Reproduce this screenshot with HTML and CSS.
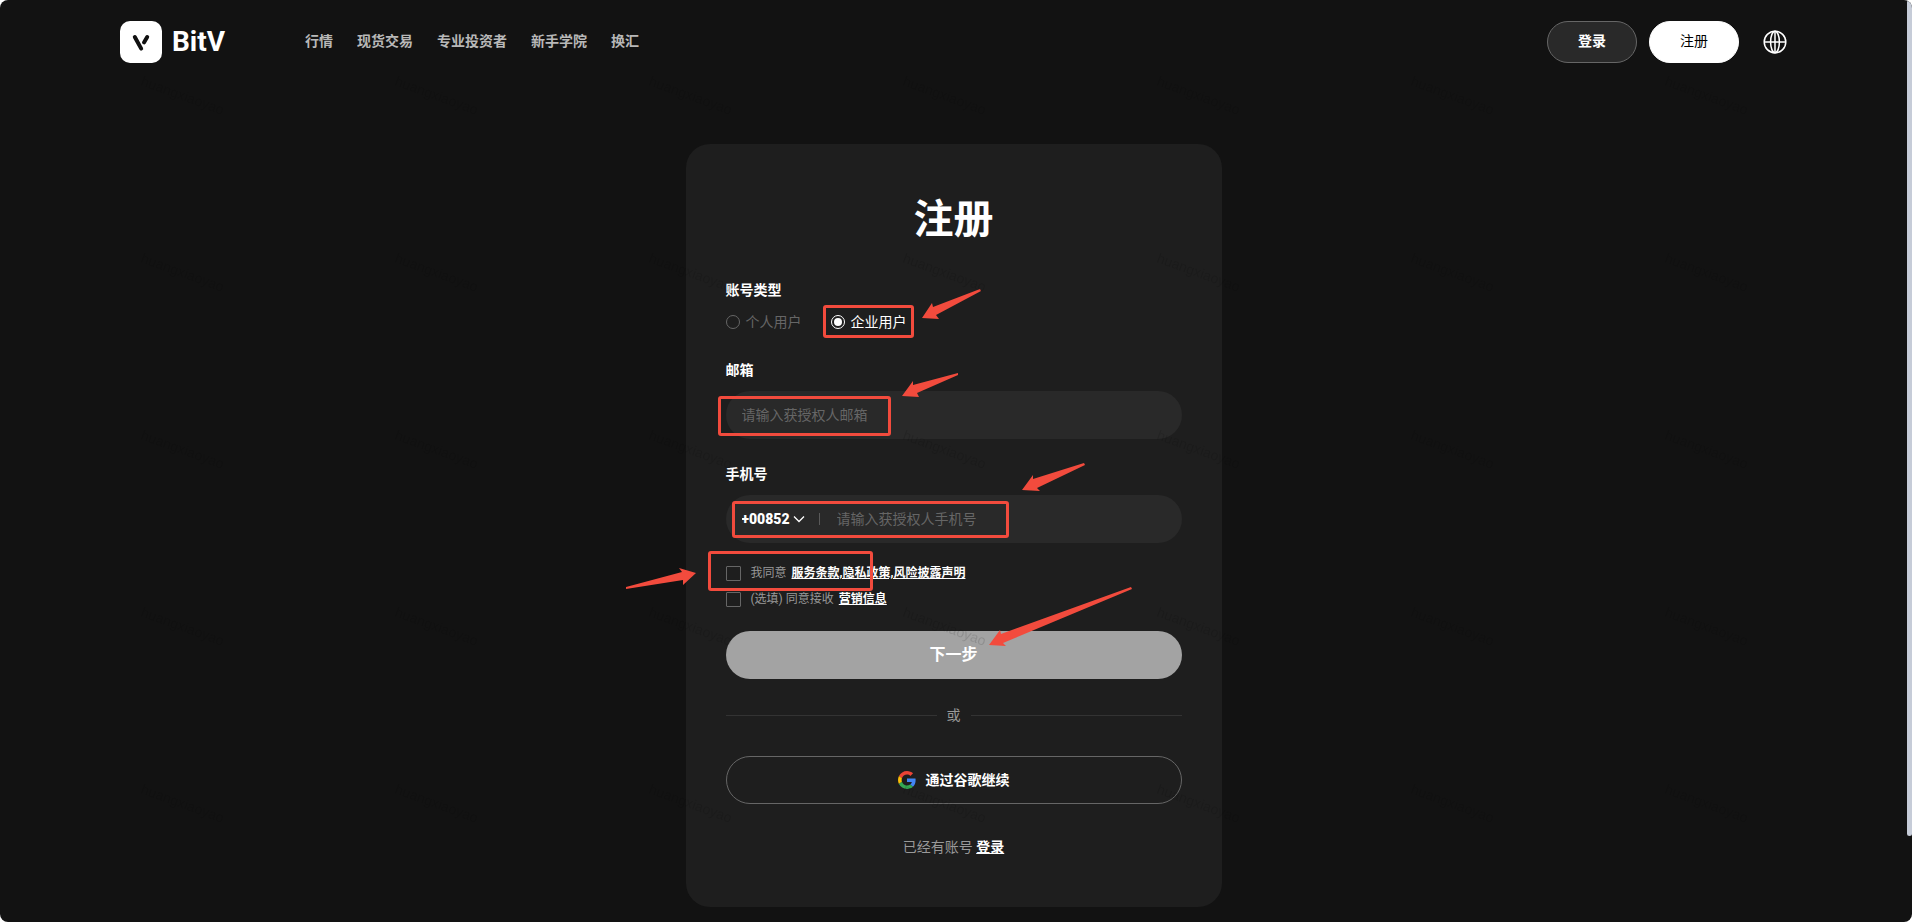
FILE: index.html
```
<!DOCTYPE html>
<html lang="zh-CN">
<head>
    <meta charset="UTF-8">
    <meta name="viewport" content="width=device-width, initial-scale=1.0">
    <title>BitV - 注册</title>
    <link rel="stylesheet" href="styles.css">
</head>
<body>

<div class="page">

    <!-- Header -->
    <header class="header">
        <a class="logo" href="#">
            <svg class="logo-mark" viewBox="0 0 42 42" aria-hidden="true">
                <rect width="42" height="42" rx="10" fill="#fff"/>
                <path d="M14.8 16 L21.2 27.6" stroke="#111" stroke-width="4" stroke-linecap="round"/>
                <path d="M27.2 16 L24 21.4" stroke="#111" stroke-width="4" stroke-linecap="round"/>
            </svg>
            <span class="logo-name">BitV</span>
        </a>
        <nav class="nav">
            <a href="#">行情</a>
            <a href="#">现货交易</a>
            <a href="#">专业投资者</a>
            <a href="#">新手学院</a>
            <a href="#">换汇</a>
        </nav>
        <div class="actions">
            <button type="button" class="btn-login">登录</button>
            <button type="button" class="btn-signup">注册</button>
            <button type="button" class="btn-lang" aria-label="语言">
                <svg viewBox="0 0 24 24" width="24" height="24" fill="none" stroke="#fff" stroke-width="1.5">
                    <circle cx="12" cy="12" r="10.8"/>
                    <ellipse cx="12" cy="12" rx="4.4" ry="10.8"/>
                    <path d="M12 1.2v21.6M1.2 12h21.6"/>
                </svg>
            </button>
        </div>
    </header>

    <!-- Register card -->
    <main class="main">
        <form class="card">
            <h1 class="title">注册</h1>

            <fieldset class="types">
                <legend class="label">账号类型</legend>
                <div class="radios">
                    <label class="radio"><input type="radio" name="type">个人用户</label>
                    <label class="radio"><input type="radio" name="type" checked>企业用户
                        <span class="mark mark-type"></span>
                    </label>
                </div>
            </fieldset>

            <div class="group">
                <label class="label" for="email">邮箱</label>
                <div class="field">
                    <input id="email" type="email" placeholder="请输入获授权人邮箱">
                    <span class="mark mark-email"></span>
                </div>
            </div>

            <div class="group">
                <label class="label" for="phone">手机号</label>
                <div class="field">
                    <select class="code" aria-label="区号">
                        <option>+00852</option>
                    </select>
                    <svg class="chevron" viewBox="0 0 12 12" aria-hidden="true">
                        <path d="M1 3.5l5 5 5-5" fill="none" stroke="#fff" stroke-width="1.3"/>
                    </svg>
                    <span class="divider"></span>
                    <input id="phone" type="tel" placeholder="请输入获授权人手机号">
                    <span class="mark mark-phone"></span>
                </div>
            </div>

            <div class="terms">
                <div class="check">
                    <input type="checkbox" id="agree">
                    <label for="agree">我同意</label>
                    <a href="#">服务条款,隐私政策,风险披露声明</a>
                    <span class="mark mark-agree"></span>
                </div>
                <div class="check">
                    <input type="checkbox" id="promo">
                    <label for="promo">(选填) 同意接收</label>
                    <a href="#">营销信息</a>
                </div>
            </div>

            <button type="button" class="btn-next">下一步</button>

            <div class="or">或</div>

            <button type="button" class="btn-google">
                <svg viewBox="0 0 48 48" width="18" height="18" aria-hidden="true">
                    <path fill="#EA4335" d="M24 9.5c3.54 0 6.71 1.22 9.21 3.6l6.85-6.85C35.9 2.38 30.47 0 24 0 14.62 0 6.51 5.38 2.56 13.22l7.98 6.19C12.43 13.72 17.74 9.5 24 9.5z"/>
                    <path fill="#4285F4" d="M46.98 24.55c0-1.57-.15-3.09-.38-4.55H24v9.02h12.94c-.58 2.96-2.26 5.48-4.78 7.18l7.73 6c4.51-4.18 7.09-10.36 7.09-17.65z"/>
                    <path fill="#FBBC05" d="M10.53 28.59c-.48-1.45-.76-2.99-.76-4.59s.27-3.14.76-4.59l-7.98-6.19C.92 16.46 0 20.12 0 24s.92 7.54 2.56 10.78l7.97-6.19z"/>
                    <path fill="#34A853" d="M24 48c6.48 0 11.93-2.13 15.89-5.81l-7.73-6c-2.15 1.45-4.92 2.3-8.16 2.3-6.26 0-11.57-4.22-13.47-9.91l-7.98 6.19C6.51 42.62 14.62 48 24 48z"/>
                </svg>
                通过谷歌继续
            </button>

            <p class="signin">已经有账号 <a href="#">登录</a></p>

            <!-- Arrows drawn over the card -->
            <svg class="arrows" viewBox="0 0 536 765" aria-hidden="true">
                <path d="M236 174 L246 159 L247 163 L294 145 L295 147 L250 171 L253 175 Z"/>
                <path d="M216 252 L227 237 L227 241 L272 229 L272 231 L231 249 L233 253 Z"/>
                <path d="M336 346 L347 331 L347 335 L398 319 L399 321 L351 344 L354 347 Z"/>
                <path d="M10 429 L-7 424 L-4 428 L-60 443 L-60 445 L-3 436 L-3 441 Z"/>
                <path d="M303 501 L314 486 L315 490 L445 443 L446 445 L317 499 L320 502 Z"/>
            </svg>
        </form>
    </main>

    <!-- Watermark -->
    <svg class="watermark" aria-hidden="true">
        <defs>
            <pattern id="wm" x="132" y="65" width="254" height="177" patternUnits="userSpaceOnUse">
                <text x="8" y="20" transform="rotate(20 8 20)">huangxiaoyao</text>
            </pattern>
        </defs>
        <rect width="100%" height="100%" fill="url(#wm)"/>
    </svg>

    <div class="scrollbar"></div>
</div>

</body>
</html>
```
FILE: styles.css
```
* {
    box-sizing: border-box;
}

body {
    margin: 0;
    background: #fff;
    color: #fff;
    font-family: Roboto, "Noto Sans CJK SC", sans-serif;
    font-size: 14px;
    line-height: 20px;
}

button,
input,
select {
    font: inherit;
    color: inherit;
}

a {
    color: inherit;
}

.page {
    position: relative;
    min-height: 100vh;
    padding-right: 5px;
    background: #121212;
    border-radius: 8px;
    overflow: hidden;
}

/* Header */
.header {
    display: flex;
    align-items: center;
    padding: 21px 120px;
}

.logo {
    display: flex;
    align-items: center;
    gap: 10px;
    text-decoration: none;
}

.logo-mark {
    width: 42px;
    height: 42px;
}

.logo-name {
    font-size: 28px;
    font-weight: 700;
}

.nav {
    display: flex;
    gap: 24px;
    margin-left: 80px;
    padding-bottom: 2px;
}

.nav a {
    color: #b8b8b8;
    font-weight: 700;
    text-decoration: none;
}

.actions {
    display: flex;
    align-items: center;
    gap: 12px;
    margin-left: auto;
}

.btn-login,
.btn-signup {
    width: 90px;
    height: 42px;
    padding: 0 0 2px;
    border: 1px solid #666;
    border-radius: 21px;
    background: #292929;
    font-weight: 700;
}

.btn-signup {
    border-color: #fff;
    background: #fff;
    color: #000;
    font-weight: 400;
}

.btn-lang {
    display: flex;
    margin-left: 12px;
    padding: 0;
    border: 0;
    background: none;
}

/* Card */
.main {
    display: flex;
    justify-content: center;
    padding: 60px 0 8px;
}

.card {
    position: relative;
    width: 536px;
    padding: 44px 40px 50px;
    border-radius: 24px;
    background: #1e1e1e;
}

.title {
    margin: 0 0 28px;
    font-size: 40px;
    line-height: 64px;
    text-align: center;
}

.label {
    display: block;
    padding: 0;
    font-weight: 700;
}

.types {
    margin: 0 0 28px;
    padding: 0;
    border: 0;
}

.radios {
    display: flex;
    gap: 29px;
    margin-top: 12px;
}

.radio {
    position: relative;
    display: flex;
    align-items: center;
    gap: 6px;
    color: #666;
}

.radio:has(:checked) {
    color: #fff;
}

.radio input {
    appearance: none;
    width: 14px;
    height: 14px;
    margin: 0;
    border: 1px solid currentColor;
    border-radius: 50%;
}

.radio input:checked {
    padding: 2px;
    background: #fff content-box;
}

.group {
    margin-bottom: 25px;
}

.field {
    position: relative;
    display: flex;
    align-items: center;
    height: 48px;
    margin-top: 11px;
    padding: 0 16px;
    border-radius: 24px;
    background: #292929;
}

.field input {
    flex: 1;
    min-width: 0;
    padding: 0;
    border: 0;
    outline: 0;
    background: none;
}

.field input::placeholder {
    color: #666;
}

.code {
    appearance: none;
    padding: 0;
    border: 0;
    background: none;
    font-weight: 900;
}

.chevron {
    width: 12px;
    height: 12px;
    margin-left: 2px;
}

.divider {
    width: 1px;
    height: 12px;
    margin: 0 17px 0 14px;
    background: #595959;
}

/* Agreements */
.terms {
    display: grid;
    gap: 6px;
    margin: -5px 0 22px;
    font-size: 12px;
}

.check {
    position: relative;
    display: flex;
    align-items: center;
    gap: 5px;
    color: #999;
}

.check input {
    appearance: none;
    width: 15px;
    height: 15px;
    margin: 0 5px 0 0;
    border: 1px solid #666;
    border-radius: 1px;
}

.check a,
.signin a {
    color: #fff;
    font-weight: 700;
}

.btn-next,
.btn-google {
    display: flex;
    align-items: center;
    justify-content: center;
    gap: 10px;
    width: 100%;
    height: 48px;
    border: 0;
    border-radius: 24px;
    background: #a3a3a3;
    font-weight: 700;
}

.btn-next {
    font-size: 16px;
}

.btn-google {
    border: 1px solid #666;
    background: none;
}

.or {
    display: flex;
    align-items: center;
    gap: 10px;
    margin: 26px 0 31px;
    color: #999;
}

.or::before,
.or::after {
    content: "";
    flex: 1;
    height: 1px;
    background: #333;
}

.signin {
    margin: 33px 0 0;
    color: #999;
    text-align: center;
}

/* Red marks over the form */
.mark {
    position: absolute;
    border: 3px solid #f24b3d;
    border-radius: 3px;
    pointer-events: none;
}

.mark-type {
    inset: -7px -7px -6px -8px;
}

.mark-email {
    top: 5px;
    left: -8px;
    width: 173px;
    height: 40px;
}

.mark-phone {
    top: 6px;
    left: 6px;
    width: 277px;
    height: 37px;
}

.mark-agree {
    top: -12px;
    left: -18px;
    width: 165px;
    height: 40px;
}

.arrows {
    position: absolute;
    top: 0;
    left: 0;
    width: 536px;
    height: 765px;
    overflow: visible;
    fill: #f24b3d;
    pointer-events: none;
}

.watermark {
    position: absolute;
    inset: 0;
    width: 100%;
    height: 100%;
    pointer-events: none;
}

.watermark text {
    font-family: "Liberation Sans", sans-serif;
    font-size: 14px;
    fill: #000;
    fill-opacity: 0.12;
}

.scrollbar {
    position: absolute;
    top: 0;
    right: 0;
    width: 5px;
    height: 836px;
    border-radius: 3px;
    background: #c6ccd8;
}
```
